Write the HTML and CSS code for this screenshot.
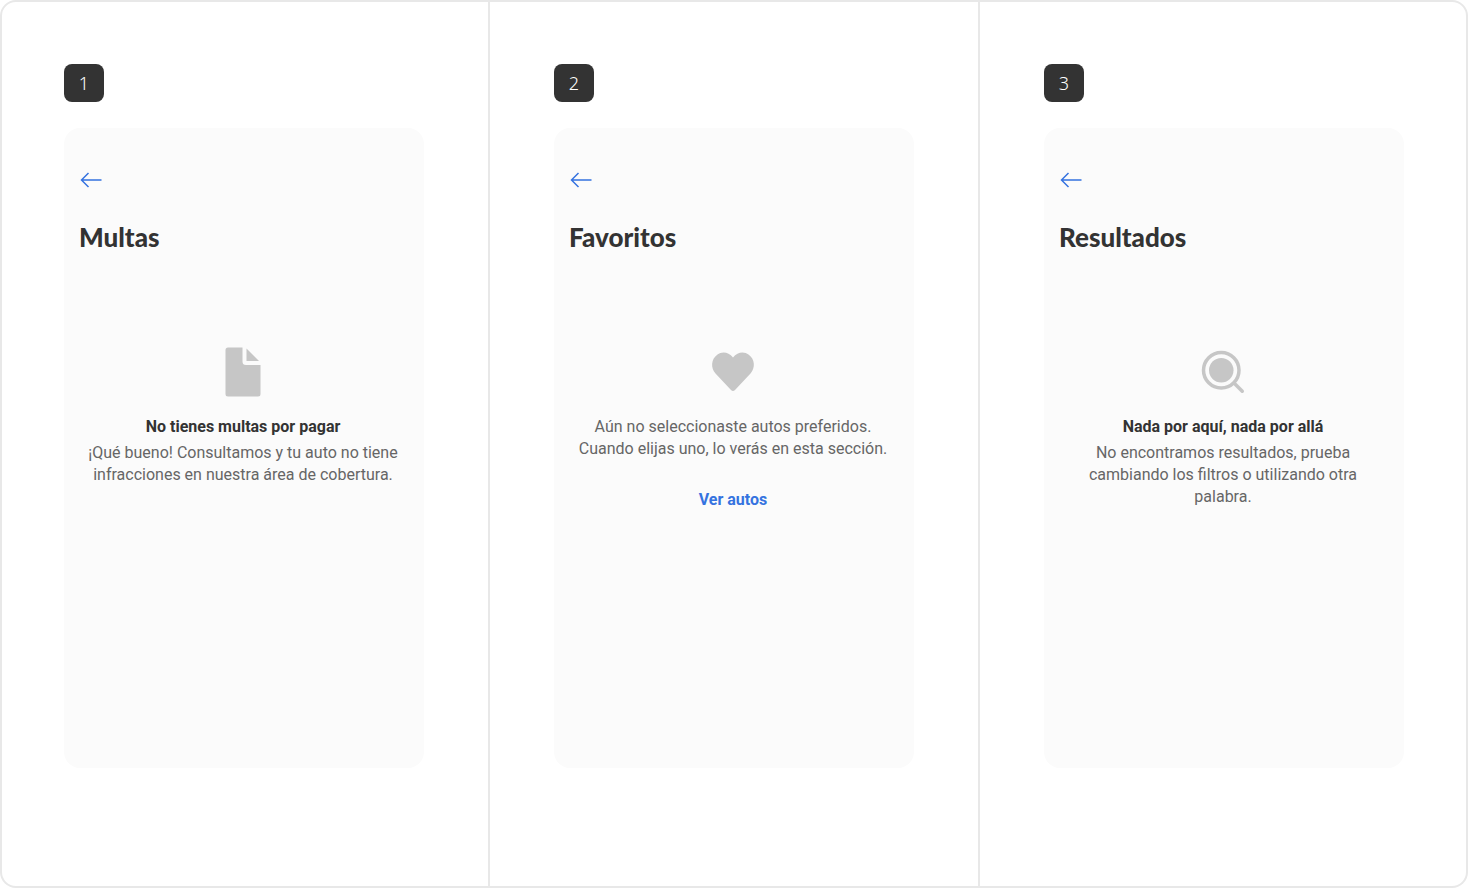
FILE: index.html
```html
<!DOCTYPE html>
<html lang="es">
<head>
    <meta charset="UTF-8">
    <meta name="viewport" content="width=device-width, initial-scale=1.0">
    <title>Estados vacíos</title>
    <link rel="stylesheet" href="styles.css">
</head>
<body>
    <main class="board">
        <section class="column">
            <span class="badge">1</span>
            <article class="screen">
                <button class="back-button" type="button" aria-label="Volver">
                    <svg width="24" height="24" viewBox="0 0 24 24"><path d="M22.500 12H2.500M9.500 5L2.500 12l7 7"/></svg>
                </button>
                <h1>Multas</h1>
                <div class="empty">
                    <svg class="icon" width="56" height="56" viewBox="0 0 56 56">
                        <path d="M13 3.500H27.500V17.500Q27.500 21 31 21H45.500V50Q45.500 52.500 43 52.500H13Q10.500 52.500 10.500 50V6Q10.500 3.500 13 3.500Z"/>
                        <path d="M31.500 4.500L44 17H31.500Z"/>
                    </svg>
                    <h2>No tienes multas por pagar</h2>
                    <p>¡Qué bueno! Consultamos y tu auto no tiene infracciones en nuestra área de cobertura.</p>
                </div>
            </article>
        </section>
        <section class="column">
            <span class="badge">2</span>
            <article class="screen">
                <button class="back-button" type="button" aria-label="Volver">
                    <svg width="24" height="24" viewBox="0 0 24 24"><path d="M22.500 12H2.500M9.500 5L2.500 12l7 7"/></svg>
                </button>
                <h1>Favoritos</h1>
                <div class="empty">
                    <svg class="icon" width="56" height="56" viewBox="0 0 56 56">
                        <path d="M28 13.500C32.500 7.500 39.500 7.500 43.500 10.500C50 15 50.500 24 45.500 29.500L30 46Q28 48 26 46L10.500 29.500C5.500 24 6 15 12.500 10.500C16.500 7.500 23.500 7.500 28 13.500Z"/>
                    </svg>
                    <p>Aún no seleccionaste autos preferidos. Cuando elijas uno, lo verás en esta sección.</p>
                    <a class="link" href="#">Ver autos</a>
                </div>
            </article>
        </section>
        <section class="column">
            <span class="badge">3</span>
            <article class="screen">
                <button class="back-button" type="button" aria-label="Volver">
                    <svg width="24" height="24" viewBox="0 0 24 24"><path d="M22.500 12H2.500M9.500 5L2.500 12l7 7"/></svg>
                </button>
                <h1>Resultados</h1>
                <div class="empty">
                    <svg class="icon" width="56" height="56" viewBox="0 0 56 56">
                        <circle cx="26.250" cy="26.250" r="12.250"/>
                        <circle class="line" cx="26.250" cy="26.250" r="17.750"/>
                        <path class="line" d="M39 39l8.250 8.250"/>
                    </svg>
                    <h2>Nada por aquí, nada por allá</h2>
                    <p>No encontramos resultados, prueba cambiando los filtros o utilizando otra palabra.</p>
                </div>
            </article>
        </section>
    </main>
</body>
</html>
```
FILE: styles.css
```css
body {
    margin: 0;
    background-color: white;
    color: #333;
    font-family: Roboto, "Liberation Sans", sans-serif;
    font-size: 16px;
    line-height: 22px;
}

.board {
    display: flex;
    box-sizing: border-box;
    min-height: 100vh;
    border-radius: 16px;
    box-shadow: inset 0 0 0 2px #e8e8e8;
}

.column {
    flex: 1;
    padding: 64px;
}

.column + .column {
    border-left: 2px solid #e8e8e8;
}

.badge {
    display: flex;
    align-items: center;
    justify-content: center;
    width: 40px;
    height: 38px;
    margin-bottom: 26px;
    border-radius: 8px;
    background-color: #333;
    color: white;
    font-family: "Noto Sans", sans-serif;
    font-size: 18px;
    font-weight: 300;
}

.screen {
    box-sizing: border-box;
    min-height: 640px;
    padding: 40px 17px 40px 15px;
    border-radius: 16px;
    background-color: #fbfbfb;
}

.back-button {
    display: block;
    padding: 0;
    border: none;
    background: none;
    cursor: pointer;
}

.back-button svg {
    display: block;
    fill: none;
    stroke: #3573e0;
    stroke-width: 1.5;
}

h1 {
    margin: 27px 0 0;
    font-family: Lato, sans-serif;
    font-size: 26px;
    font-weight: 900;
    line-height: 36px;
}

.empty {
    display: flex;
    flex-direction: column;
    align-items: center;
    max-width: 312px;
    margin: 89px auto 0;
    text-align: center;
}

.icon {
    margin-bottom: 16px;
    fill: #c6c6c6;
}

.icon .line {
    fill: none;
    stroke: #c6c6c6;
    stroke-width: 3.5;
    stroke-linecap: round;
}

h2 {
    margin: 0 0 4px;
    font-size: 16px;
    font-weight: 700;
    line-height: 22px;
}

p {
    margin: 0;
    color: #666;
}

.link {
    margin-top: 29px;
    color: #3573e0;
    font-weight: 700;
    text-decoration: none;
}
```
